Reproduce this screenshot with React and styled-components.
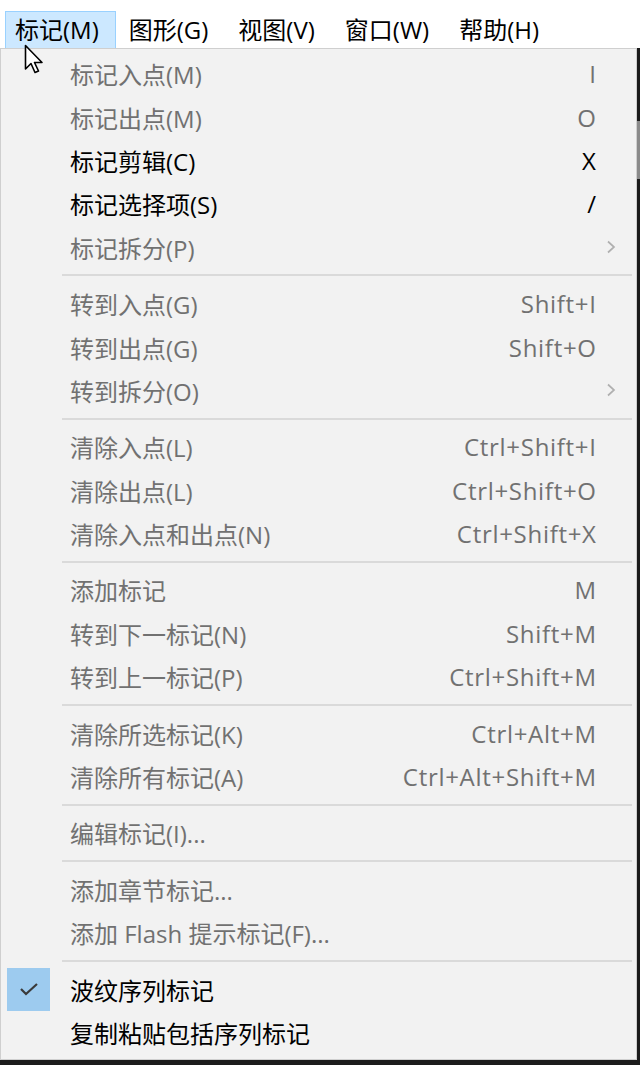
import React from "react";
import styled, { createGlobalStyle } from "styled-components";

const GlobalStyle = createGlobalStyle`
  html, body {
    margin: 0;
    padding: 0;
    background: #ffffff;
  }
  body {
    font-family: "Open Sans", "Noto Sans CJK SC", sans-serif;
  }
`;

const topItems = ["标记(M)", "图形(G)", "视图(V)", "窗口(W)", "帮助(H)"];

const sections = [
  [
    { label: "标记入点(M)", shortcut: "I" },
    { label: "标记出点(M)", shortcut: "O" },
    { label: "标记剪辑(C)", shortcut: "X", enabled: true },
    { label: "标记选择项(S)", shortcut: "/", enabled: true },
    { label: "标记拆分(P)", submenu: true },
  ],
  [
    { label: "转到入点(G)", shortcut: "Shift+I" },
    { label: "转到出点(G)", shortcut: "Shift+O" },
    { label: "转到拆分(O)", submenu: true },
  ],
  [
    { label: "清除入点(L)", shortcut: "Ctrl+Shift+I" },
    { label: "清除出点(L)", shortcut: "Ctrl+Shift+O" },
    { label: "清除入点和出点(N)", shortcut: "Ctrl+Shift+X" },
  ],
  [
    { label: "添加标记", shortcut: "M" },
    { label: "转到下一标记(N)", shortcut: "Shift+M" },
    { label: "转到上一标记(P)", shortcut: "Ctrl+Shift+M" },
  ],
  [
    { label: "清除所选标记(K)", shortcut: "Ctrl+Alt+M" },
    { label: "清除所有标记(A)", shortcut: "Ctrl+Alt+Shift+M" },
  ],
  [{ label: "编辑标记(I)..." }],
  [
    { label: "添加章节标记..." },
    { label: "添加 Flash 提示标记(F)..." },
  ],
  [
    { label: "波纹序列标记", enabled: true, checked: true },
    { label: "复制粘贴包括序列标记", enabled: true },
  ],
];

export default function App() {
  return (
    <Screen>
      <GlobalStyle />
      <MenuBar>
        {topItems.map((t, i) => (
          <TopItem key={t} $active={i === 0}>
            {t}
          </TopItem>
        ))}
      </MenuBar>
      <Stage>
        <Panel>
          {sections.map((items, si) => (
            <React.Fragment key={si}>
              {si > 0 && <Separator />}
              {items.map((item) => (
                <Row key={item.label} $enabled={item.enabled}>
                  <CheckCell>
                    {item.checked && (
                      <CheckBox>
                        <svg width="20" height="14" viewBox="0 0 20 14">
                          <polyline
                            points="2,7 7,12 18,2"
                            fill="none"
                            stroke="#3a3a3a"
                            strokeWidth="2.2"
                          />
                        </svg>
                      </CheckBox>
                    )}
                  </CheckCell>
                  <Label>{item.label}</Label>
                  <Shortcut>{item.shortcut}</Shortcut>
                  <ArrowCell>
                    {item.submenu && (
                      <svg width="10" height="14" viewBox="0 0 10 14">
                        <polyline
                          points="2,1.5 8,7 2,12.5"
                          fill="none"
                          stroke="#b0b0b0"
                          strokeWidth="1.7"
                        />
                      </svg>
                    )}
                  </ArrowCell>
                </Row>
              ))}
            </React.Fragment>
          ))}
        </Panel>
        <Edge>
          <EdgeThumb />
        </Edge>
      </Stage>
      <Cursor width="22" height="32" viewBox="0 0 22 32">
        <path
          d="M1.5 1.5 L1.5 25 L7 19.5 L11 28.5 L14.5 27 L10.5 18.5 L18 18.5 Z"
          fill="#ffffff"
          stroke="#000000"
          strokeWidth="1.6"
          strokeLinejoin="round"
        />
      </Cursor>
    </Screen>
  );
}

const Screen = styled.div`
  position: relative;
  width: 640px;
  height: 1065px;
  display: flex;
  flex-direction: column;
  overflow: hidden;
  font-family: "Open Sans", "Noto Sans CJK SC", sans-serif;
  font-size: 24px;
`;

const MenuBar = styled.div`
  height: 48px;
  flex-shrink: 0;
  background: #ffffff;
  display: flex;
  align-items: flex-end;
  gap: 3px;
  padding-left: 5px;
  box-sizing: border-box;
`;

const TopItem = styled.div`
  height: 37px;
  box-sizing: border-box;
  padding: 0 16px 0 9px;
  display: flex;
  align-items: center;
  color: #000;
  background: ${(p) => (p.$active ? "#cce8ff" : "transparent")};
  border: 1px solid ${(p) => (p.$active ? "#99d1ff" : "transparent")};
  border-bottom: none;
  line-height: 1;
`;

const Stage = styled.div`
  flex: 1;
  display: flex;
  background: #1c1c1c;
  align-items: flex-start;
`;

const Panel = styled.div`
  flex: 1;
  background: #f2f2f2;
  border: 1px solid #cfcfcf;
  padding: 3px 0 5px;
  display: flex;
  flex-direction: column;
`;

const Edge = styled.div`
  width: 3px;
  align-self: stretch;
  padding-top: 73px;
`;

const EdgeThumb = styled.div`
  height: 58px;
  background: #8a8a8a;
`;

const Row = styled.div`
  height: 43.4px;
  display: flex;
  align-items: center;
  color: ${(p) => (p.$enabled ? "#000000" : "#717171")};
  white-space: nowrap;
`;

const CheckCell = styled.div`
  width: 69px;
  height: 100%;
  display: flex;
  align-items: center;
  padding-left: 6px;
  box-sizing: border-box;
  flex-shrink: 0;
`;

const CheckBox = styled.div`
  width: 43px;
  height: 43px;
  background: #9dcbef;
  display: flex;
  align-items: center;
  justify-content: center;
`;

const Label = styled.div`
  flex: 1;
`;

const Shortcut = styled.div`
  text-align: right;
  letter-spacing: 0.7px;
  margin-right: -0.7px;
`;

const ArrowCell = styled.div`
  width: 40px;
  flex-shrink: 0;
  display: flex;
  align-items: center;
  padding-left: 10px;
  box-sizing: border-box;
`;

const Separator = styled.div`
  height: 2px;
  background: #dadada;
  margin: 5.5px 4px 5.5px 61px;
`;

const Cursor = styled.svg`
  position: absolute;
  left: 24px;
  top: 44px;
`;
